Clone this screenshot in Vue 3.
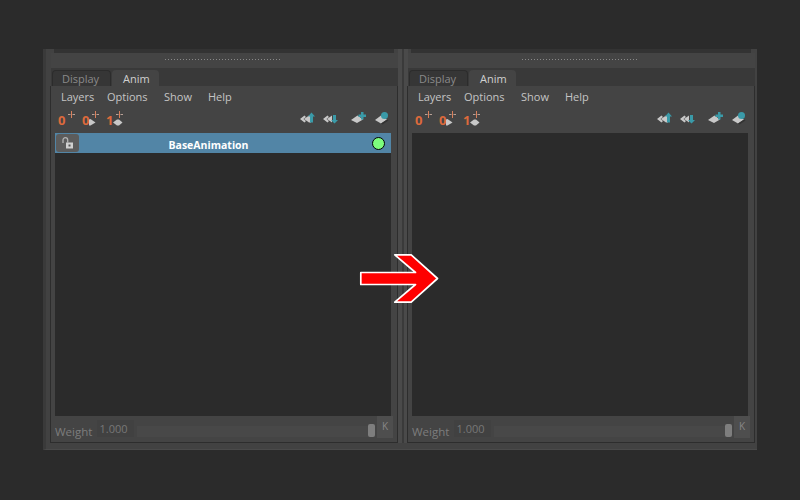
<script setup>
const panels = [
  { id: 'left', layer: true },
  { id: 'right', layer: false }
]
const menus = ['Layers', 'Options', 'Show', 'Help']
const keys = ['0', '0', '1']
</script>

<template>
  <div class="page">
    <div class="frame">
      <template v-for="(p, n) in panels" :key="p.id">
        <div v-if="n > 0" class="splitter"></div>
        <div class="dock">
          <div class="strip"></div>
          <div class="grip"><span class="dots"></span></div>
          <div class="tabbar">
            <span class="tab off">Display</span>
            <span class="tab on">Anim</span>
          </div>
          <div class="body">
            <div class="menu">
              <span v-for="m in menus" :key="m">{{ m }}</span>
            </div>
            <div class="tools">
              <div class="keys">
                <span v-for="(k, i) in keys" :key="i" class="key">
                  <b>{{ k }}</b>
                  <svg width="16" height="18" viewBox="0 0 16 18">
                    <path d="M6.500 1v7" stroke="#d9805c" fill="none" />
                    <path d="M3 4.500h2.500M7.500 4.500h2.500" stroke="#b9a196" fill="none" />
                    <path v-if="i === 1" d="M0 9.500l1.500-.5 5 3.500-5 3L0 15.500z" fill="#c8c8c8" />
                    <path v-if="i === 2" d="M0 12.500l4-3h2l3.500 3-3.500 3H4z" fill="#c8c8c8" />
                  </svg>
                </span>
              </div>
              <div class="acts">
                <svg width="16" height="13" viewBox="0 0 16 13">
                  <path d="M0 7l4.500-3.500L6 5 3.500 7 6 9l-1.500 1.500z" fill="#c8c8c8" />
                  <path d="M4 7l5-3.500h2v7H9z" fill="#c8c8c8" />
                  <path d="M11.500 0.500L15 4.500H13V10.500H10V4.500H8z" fill="#3a9aa8" />
                </svg>
                <svg width="16" height="13" viewBox="0 0 16 13">
                  <path d="M0 7l4.500-3.500L6 5 3.500 7 6 9l-1.500 1.500z" fill="#c8c8c8" />
                  <path d="M4 7l5-3.500v7z" fill="#c8c8c8" />
                  <path d="M10 3h3v5h2l-3.500 3.500L8 8h2z" fill="#3a9aa8" />
                </svg>
                <svg width="16" height="13" viewBox="0 0 16 13">
                  <path d="M0 8l6.500-4.500 5.500 4-6 3.500z" fill="#c8c8c8" />
                  <path d="M10 0h2.500v2.500H15V5h-2.500v2.500H10V5H7.500V2.500H10z" fill="#3a9aa8" />
                </svg>
                <svg width="17" height="13" viewBox="0 0 17 13">
                  <path d="M1 8l6-4.500 6 4-6 4z" fill="#c8c8c8" />
                  <path d="M7 11.500l6-4 1.500 1-6 4z" fill="#333" />
                  <circle cx="10.500" cy="3.500" r="3.500" fill="#3a9aa8" />
                </svg>
              </div>
            </div>
            <div class="list">
              <div v-if="p.layer" class="layer">
                <span class="lock">
                  <svg width="12" height="12" viewBox="0 0 12 12">
                    <path d="M1 6V3a2.300 2.300 0 0 1 4.700 0V5.500" stroke="#b4b4b4" stroke-width="1.300" fill="none" />
                    <path d="M4 5.500h7v6H4z" fill="#d0d0d0" />
                    <path d="M6.500 7.500h2v2h-2z" fill="#555" />
                  </svg>
                </span>
                <span class="name">BaseAnimation</span>
                <span class="dot"></span>
              </div>
            </div>
            <div class="weight">
              <span class="wlabel">Weight</span>
              <span class="wvalue">1.000</span>
              <span class="track"><i></i></span>
              <span class="k">K</span>
            </div>
          </div>
        </div>
      </template>
    </div>
    <svg class="arrow" width="84" height="56" viewBox="0 0 84 56">
      <path d="M2.800 21.500H57.500L36.800 3.800H53.200L79.500 27.500 53.200 51.200H36.800L57.500 33.500H2.800z" fill="#fe0000" stroke="#fff" stroke-width="1.700" stroke-linejoin="round" />
    </svg>
  </div>
</template>

<style>
html, body { margin: 0; background: #2b2b2b; }
</style>

<style scoped>
.page {
  position: relative;
  width: 800px;
  height: 500px;
  padding: 49px 43px 0;
  box-sizing: border-box;
  background: #2b2b2b;
  font-family: "Open Sans", "Noto Sans", sans-serif;
  font-size: 11px;
  color: #c4c4c4;
}
.frame {
  display: flex;
  height: 401px;
  padding: 0 2px 6px 5px;
  box-sizing: border-box;
  background: #424242;
  border-left: 3px solid #3a3a3a;
  border-bottom: 1px solid #4a4a4a;
}
.splitter {
  width: 10px;
  background: linear-gradient(90deg, #4a4a4a 0 4px, #3a3a3a 4px 6px, #4a4a4a 6px);
}
.dock {
  width: 347px;
  display: flex;
  flex-direction: column;
}
.strip {
  height: 4px;
  margin: 0 4px 0 3px;
  background: #333;
}
.grip {
  height: 15px;
  background: #444;
  display: flex;
  justify-content: center;
  align-items: flex-start;
}
.dots {
  width: 116px;
  height: 1px;
  margin: 6px 4px 0 0;
  background: repeating-linear-gradient(90deg, #888 0 1px, transparent 1px 3px);
}
.tabbar {
  height: 18px;
  background: #393939;
  display: flex;
  align-items: flex-end;
  gap: 1px;
  padding-left: 1px;
}
.tab {
  height: 16px;
  line-height: 18px;
  border-radius: 4px 4px 0 0;
  box-sizing: border-box;
}
.tab.off {
  width: 59px;
  color: #8a8a8a;
  background: #363636;
  border: 1px solid #2c2c2c;
  border-bottom: 0;
  padding-left: 9px;
  line-height: 16px;
}
.tab.on {
  width: 47px;
  padding-left: 11px;
  background: #444;
  color: #d0d0d0;
}
.body {
  flex: 1;
  display: flex;
  flex-direction: column;
  background: #444;
  border: 1px solid #2d2d2d;
  border-top: 0;
  min-height: 0;
  margin-left: -1px;
}
.menu {
  display: grid;
  grid-template-columns: 46px 57px 44px auto;
  height: 21px;
  align-items: center;
  padding-left: 10px;
  margin-bottom: 1px;
}
.tools {
  height: 25px;
  display: flex;
  justify-content: space-between;
  align-items: flex-start;
  padding: 0 6px 0 7px;
}
.keys {
  display: flex;
  margin-top: 2px;
}
.key {
  display: flex;
  width: 24px;
  align-items: flex-start;
}
.key b {
  width: 7px;
  margin-top: 3px;
  color: #dd6a3c;
  font-size: 13px;
  line-height: 14px;
  font-weight: 700;
}
.acts {
  display: flex;
  align-items: center;
  margin-top: 4px;
}
.acts svg { margin-left: 7px; }
.acts svg:nth-child(3) { margin-left: 12px; }
.list {
  flex: 1;
  background: #2b2b2b;
  margin: 0 6px 0 4px;
}
.layer {
  height: 20px;
  display: flex;
  align-items: center;
  background: #5285a6;
}
.lock {
  width: 23px;
  height: 18px;
  margin-left: 1px;
  display: flex;
  align-items: center;
  justify-content: center;
  background: #5c5c5c;
  border-radius: 3px;
}
.name {
  flex: 1;
  text-align: center;
  color: #fff;
  font-weight: 700;
  font-size: 10.500px;
  margin: 3px 34px 0 0;
}
.dot {
  width: 11px;
  height: 11px;
  margin-right: 6px;
  border-radius: 50%;
  background: #7dfd7d;
  border: 1px solid #000;
}
.weight {
  height: 26px;
  display: flex;
  align-items: flex-start;
  padding-left: 4px;
  color: #7d7d7d;
}
.wlabel {
  width: 42px;
  margin-top: 8px;
  font-size: 11.500px;
  line-height: 16px;
}
.wvalue {
  width: 37px;
  height: 17px;
  line-height: 17px;
  margin-top: 4px;
  padding-right: 4px;
  box-sizing: border-box;
  text-align: center;
  background: #414141;
  color: #777;
}
.track {
  flex: 1;
  height: 11px;
  margin: 10px 2px 0 3px;
  display: flex;
  justify-content: flex-end;
  background: #484848;
}
.track i {
  width: 7px;
  height: 13px;
  margin: -2px 0 0;
  border-radius: 2px;
  background: #7e7e7e;
}
.k {
  width: 16px;
  height: 22px;
  line-height: 20px;
  text-align: center;
  background: #4e4e4e;
  color: #868686;
  font-size: 10px;
  margin-right: 4px;
}
.arrow {
  position: absolute;
  left: 358px;
  top: 251px;
}
</style>
